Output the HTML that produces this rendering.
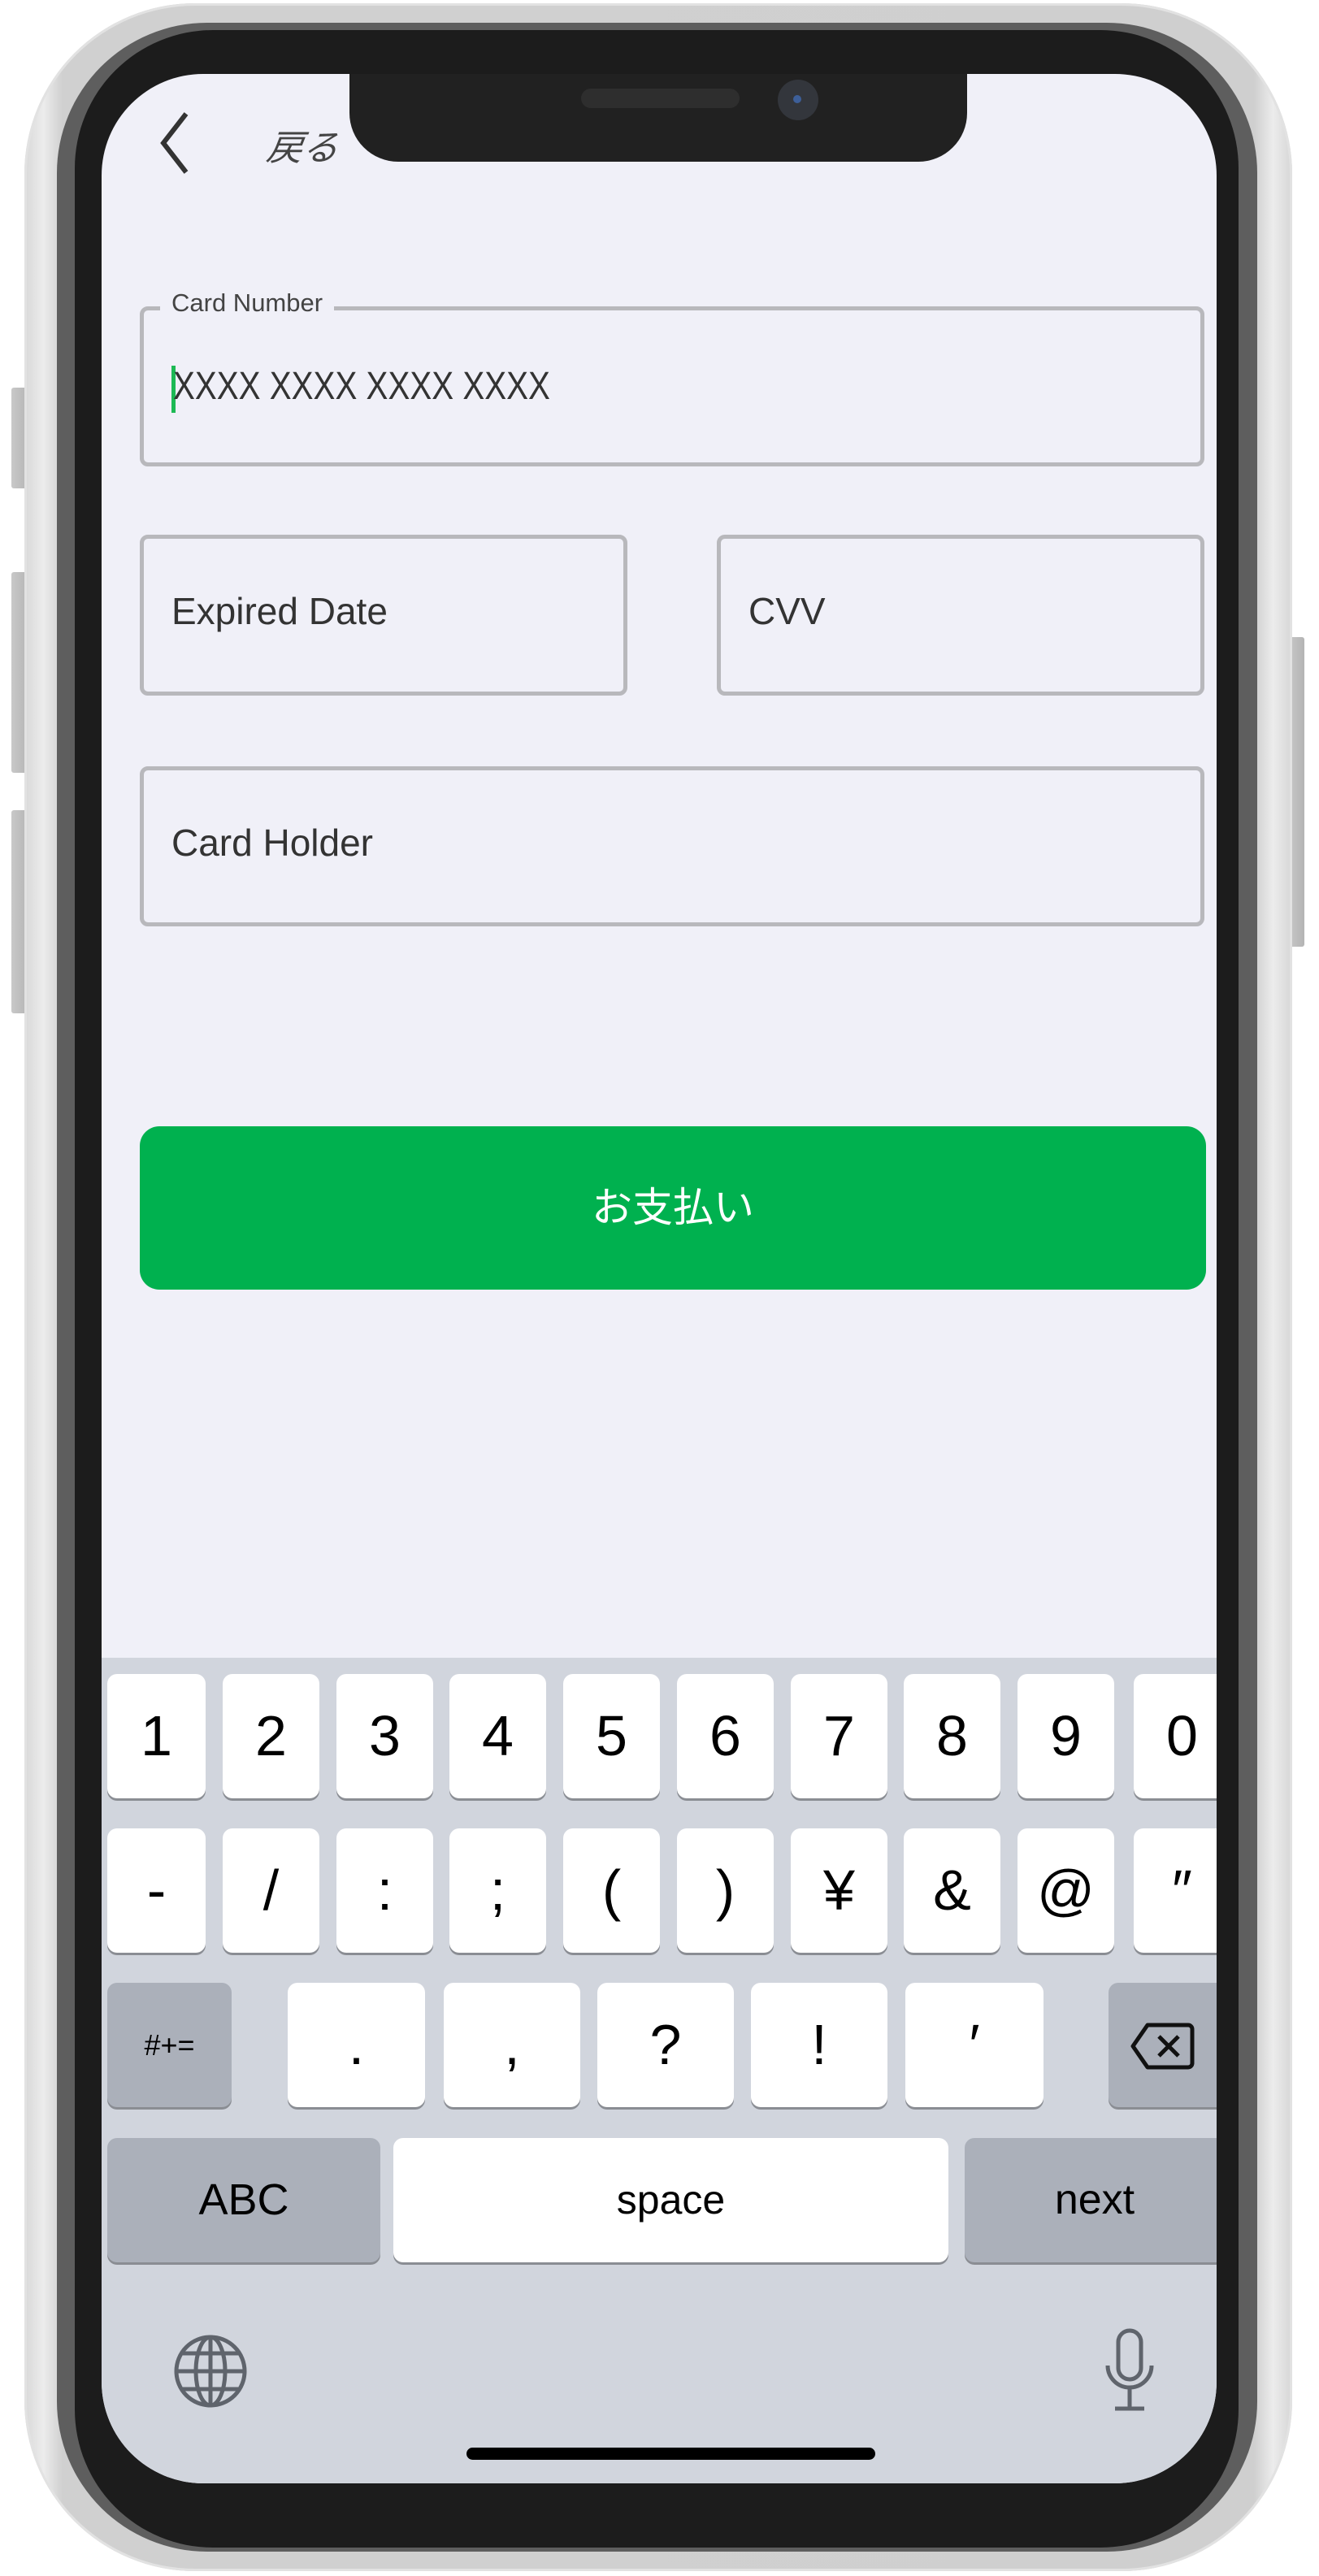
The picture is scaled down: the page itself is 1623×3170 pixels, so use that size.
<!DOCTYPE html>
<html><head><meta charset="utf-8"><style>
*{margin:0;padding:0;box-sizing:border-box}
body{width:1623px;height:3170px;background:#fff;position:relative;overflow:hidden;font-family:"Liberation Sans","Noto Sans CJK JP",sans-serif}
.a{position:absolute}
.btn{background:linear-gradient(90deg,#c8c8c8,#b4b4b4);border-radius:3px}
.frame{left:30px;top:4px;width:1560px;height:3160px;border-radius:210px;background:linear-gradient(90deg,#d8d8d8 0,#ececec 1.5%,#d0d0d0 3%,#cfcfcf 97%,#ececec 98.5%,#d6d6d6 100%);box-shadow:inset 0 0 0 3px #e2e2e2}
.gray{left:70px;top:28px;width:1477px;height:3112px;border-radius:185px;background:#5e5e5e}
.black{left:92px;top:37px;width:1432px;height:3098px;border-radius:170px;background:#1c1c1c}
.screen{left:125px;top:91px;width:1372px;height:2965px;border-radius:125px;background:#f0f0f8;overflow:hidden}
.notch{left:305px;top:-10px;width:760px;height:118px;background:#212121;border-radius:0 0 60px 60px}
.field{position:absolute;border:5px solid #b8b8bc;border-radius:10px}
.ft{position:absolute;left:34px;font-size:46px;color:#333}
.kb{left:0;top:1949px;width:1372px;height:1016px;background:#d1d5dd}
.k{position:absolute;height:153px;background:#fff;border-radius:12px;box-shadow:0 3px 0 #8a8d93;text-align:center;font-size:70px;line-height:153px;color:#000}
.g{background:#abb0ba}
</style></head><body>
<div class="a btn" style="left:14px;top:477px;width:22px;height:124px"></div>
<div class="a btn" style="left:14px;top:704px;width:22px;height:247px"></div>
<div class="a btn" style="left:14px;top:997px;width:22px;height:250px"></div>
<div class="a btn" style="left:1585px;top:784px;width:20px;height:381px"></div>
<div class="a frame"></div>
<div class="a gray"></div>
<div class="a black"></div>
<div class="a screen">
  <div class="a notch"></div>
  <div class="a" style="left:590px;top:18px;width:195px;height:24px;border-radius:12px;background:#2e2e2e"></div>
  <div class="a" style="left:832px;top:7px;width:50px;height:50px;border-radius:50%;background:#33363c"></div>
  <div class="a" style="left:851px;top:26px;width:10px;height:10px;border-radius:50%;background:#3d5f99"></div>
  <svg class="a" style="left:66px;top:45px" width="50" height="80"><path d="M38 4 L10 40 L38 76" stroke="#333" stroke-width="6" fill="none"/></svg>
  <div class="a" style="left:204px;top:55px;font-size:44px;color:#444;font-style:italic;transform:skewX(-8deg)">戻る</div>

  <div class="field" style="left:47px;top:286px;width:1310px;height:197px"></div>
  <div class="a" style="left:72px;top:264px;padding:0 14px;background:#f0f0f8;font-size:31px;color:#444">Card Number</div>
  <div class="a" style="left:86px;top:359px;width:5px;height:58px;background:#1db954"></div>
  <div class="a" style="left:88px;top:357px;font-size:48px;color:#333;transform:scaleX(.84);transform-origin:left;white-space:nowrap">XXXX XXXX XXXX XXXX</div>

  <div class="field" style="left:47px;top:567px;width:600px;height:198px"><div class="ft" style="top:62px">Expired Date</div></div>
  <div class="field" style="left:757px;top:567px;width:600px;height:198px"><div class="ft" style="top:62px">CVV</div></div>
  <div class="field" style="left:47px;top:852px;width:1310px;height:197px"><div class="ft" style="top:62px">Card Holder</div></div>

  <div class="a" style="left:47px;top:1295px;width:1312px;height:201px;background:#00b14f;border-radius:24px;color:#fff;font-size:50px;text-align:center;line-height:201px">お支払い</div>

  <div class="a kb">
    <div class="k" style="left:7px;top:20px;width:121px">1</div>
    <div class="k" style="left:149px;top:20px;width:119px">2</div>
    <div class="k" style="left:289px;top:20px;width:119px">3</div>
    <div class="k" style="left:428px;top:20px;width:119px">4</div>
    <div class="k" style="left:568px;top:20px;width:119px">5</div>
    <div class="k" style="left:708px;top:20px;width:119px">6</div>
    <div class="k" style="left:848px;top:20px;width:119px">7</div>
    <div class="k" style="left:987px;top:20px;width:119px">8</div>
    <div class="k" style="left:1127px;top:20px;width:119px">9</div>
    <div class="k" style="left:1270px;top:20px;width:119px">0</div>

    <div class="k" style="left:7px;top:210px;width:121px">-</div>
    <div class="k" style="left:149px;top:210px;width:119px">/</div>
    <div class="k" style="left:289px;top:210px;width:119px">:</div>
    <div class="k" style="left:428px;top:210px;width:119px">;</div>
    <div class="k" style="left:568px;top:210px;width:119px">(</div>
    <div class="k" style="left:708px;top:210px;width:119px">)</div>
    <div class="k" style="left:848px;top:210px;width:119px">¥</div>
    <div class="k" style="left:987px;top:210px;width:119px">&amp;</div>
    <div class="k" style="left:1127px;top:210px;width:119px">@</div>
    <div class="k" style="left:1270px;top:210px;width:119px">″</div>

    <div class="k g" style="left:7px;top:400px;width:153px;font-size:36px">#+=</div>
    <div class="k" style="left:229px;top:400px;width:169px">.</div>
    <div class="k" style="left:421px;top:400px;width:168px">,</div>
    <div class="k" style="left:610px;top:400px;width:168px">?</div>
    <div class="k" style="left:799px;top:400px;width:168px">!</div>
    <div class="k" style="left:989px;top:400px;width:170px">′</div>
    <div class="k g" style="left:1239px;top:400px;width:150px"><svg style="position:absolute;left:26px;top:48px" width="80" height="60"><path d="M22 4 H72 a5 5 0 0 1 5 5 V51 a5 5 0 0 1 -5 5 H22 L4 30 Z" fill="none" stroke="#111" stroke-width="5" stroke-linejoin="round"/><path d="M36 18 L60 42 M60 18 L36 42" stroke="#111" stroke-width="5"/></svg></div>

    <div class="k g" style="left:7px;top:591px;width:336px;font-size:54px">ABC</div>
    <div class="k" style="left:359px;top:591px;width:683px;font-size:50px">space</div>
    <div class="k g" style="left:1062px;top:591px;width:320px;font-size:52px">next</div>

    <svg class="a" style="left:88px;top:832px" width="92" height="92" viewBox="0 0 92 92" fill="none" stroke="#5f646c" stroke-width="5"><circle cx="46" cy="46" r="42"/><ellipse cx="46" cy="46" rx="18" ry="42"/><line x1="46" y1="4" x2="46" y2="88"/><line x1="4" y1="46" x2="88" y2="46"/><path d="M12 24 H80 M12 68 H80"/></svg>
    <svg class="a" style="left:1233px;top:825px" width="64" height="104" viewBox="0 0 64 104" fill="none" stroke="#5f646c" stroke-width="5"><rect x="18" y="3" width="28" height="60" rx="14"/><path d="M5 46 a27 27 0 0 0 54 0"/><line x1="32" y1="73" x2="32" y2="98"/><line x1="14" y1="99" x2="50" y2="99"/></svg>
    <div class="a" style="left:449px;top:972px;width:503px;height:15px;border-radius:8px;background:#000"></div>
  </div>
</div>
</body></html>
